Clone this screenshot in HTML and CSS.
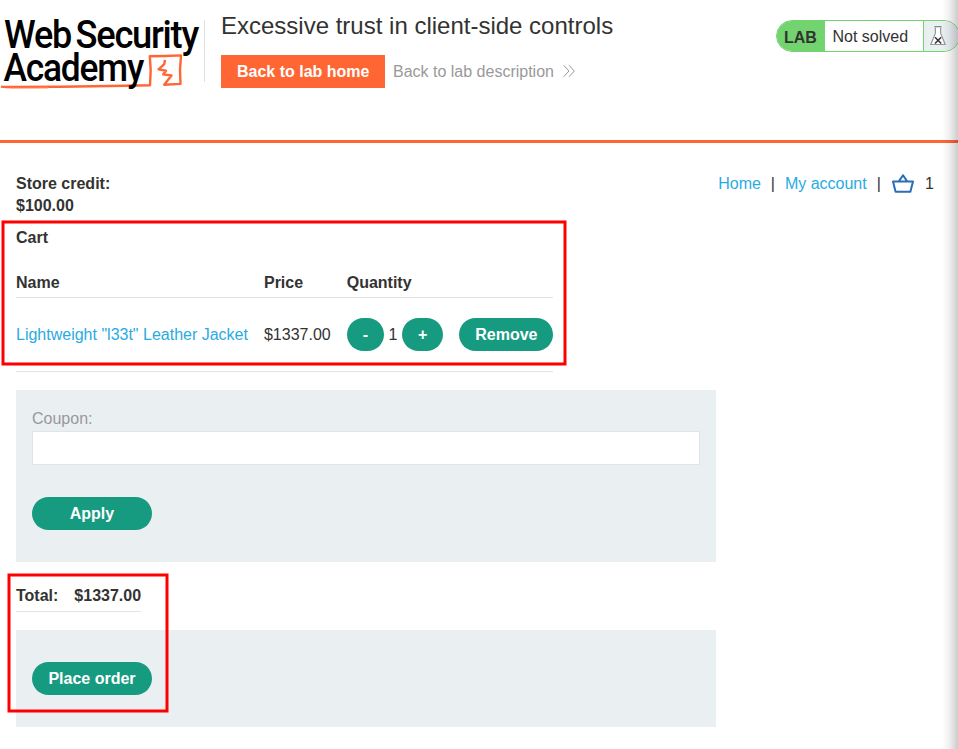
FILE: index.html
```html
<!DOCTYPE html>
<html lang="en">
<head>
<meta charset="utf-8">
<title>Excessive trust in client-side controls</title>
<link rel="stylesheet" href="styles.css">
</head>
<body>
<header class="lab-header">
  <svg class="logo" width="204" height="100" viewBox="0 0 204 100" role="img" aria-label="Web Security Academy">
    <path d="M1 86.6 Q4 87.2 10 87 L60 86.8 L110 86 L150 85.2 L150.7 70 L149.8 56.3 L165 56 L181 55.4 L180 70 L180.5 83.9 L164.2 84.7 L171.5 75.5 L163.2 74.4 L166 70.8 L158.6 69.4 L164.2 64.2 L165 60" fill="none" stroke="#ff6633" stroke-width="2.4" stroke-linejoin="round"/>
    <path d="M10 88.4 L48 88.2" stroke="#ffb59b" stroke-width="1"/>
    <g class="logo-text">
      <text x="4" y="48.2" textLength="67" lengthAdjust="spacingAndGlyphs">Web</text>
      <text x="75.5" y="48.2" textLength="122.5" lengthAdjust="spacingAndGlyphs">Security</text>
      <text x="3.5" y="81" textLength="139.5" lengthAdjust="spacingAndGlyphs">Academy</text>
    </g>
  </svg>
  <div class="title">
    <h2>Excessive trust in client-side controls</h2>
    <div class="lab-links">
      <a class="lab-home" href="#">Back to lab home</a>
      <a class="lab-description" href="#">Back to lab description
        <svg width="12" height="12" viewBox="0 0 12 12"><path d="M.7 .3 L6 6 L.7 11.7 M6 .3 L11.3 6 L6 11.7" fill="none" stroke="#999" stroke-width="1"/></svg>
      </a>
    </div>
  </div>
  <div class="status">
    <span class="status-tag">LAB</span>
    <p>Not solved</p>
    <span class="status-icon">
      <svg width="16" height="20" viewBox="0 0 16 20"><path d="M5.4 1.5 V7.2 L.8 18.5 H15.2 L10.6 7.2 V1.5" fill="#fff" stroke="#999" stroke-width="1.2"/><path d="M4.4 .6 H11.6" stroke="#888" stroke-width="1.2"/><path d="M5 11.3 L11.2 17.5 M11.2 11.3 L5 17.5" stroke="#333" stroke-width="1.5"/></svg>
    </span>
  </div>
</header>
<main class="store">
  <div class="top-row">
    <p class="credit"><strong>Store credit:<br>$100.00</strong></p>
    <nav>
      <a href="#">Home</a><span class="bar">|</span><a href="#">My account</a><span class="bar">|</span>
      <svg class="basket" width="22" height="19" viewBox="0 0 22 19"><path d="M1 7.6 H21 L18.4 17.8 H3.6 Z M6.8 7.4 L11 1.2 L15.2 7.4" fill="none" stroke="#2b6cb8" stroke-width="2" stroke-linejoin="round"/></svg>
      <span class="count">1</span>
    </nav>
  </div>
  <h3>Cart</h3>
  <table class="cart">
    <thead><tr><th>Name</th><th>Price</th><th>Quantity</th><th></th></tr></thead>
    <tbody><tr>
      <td class="text-cell"><a href="#">Lightweight "l33t" Leather Jacket</a></td>
      <td class="text-cell">$1337.00</td>
      <td><div class="quantity"><button class="minus">-</button><span>1</span><button class="plus">+</button></div></td>
      <td><button class="remove">Remove</button></td>
    </tr></tbody>
  </table>
  <form class="panel coupon">
    <label for="coupon">Coupon:</label>
    <input id="coupon" type="text">
    <button type="button" class="wide">Apply</button>
  </form>
  <div class="total"><span>Total:</span><span>$1337.00</span></div>
  <form class="panel order"><button type="button" class="wide">Place order</button></form>
</main>
<svg class="highlights" width="958" height="749" viewBox="0 0 958 749"><rect x="3" y="222" width="562" height="142"/><rect x="9" y="575" width="158" height="136"/></svg>
<div class="edge-shadow"></div>
</body>
</html>
```
FILE: styles.css
```css
* { box-sizing: border-box; }
body {
  margin: 0;
  position: relative;
  height: 749px;
  overflow: hidden;
  background: #fff;
  color: #333332;
  font: 16px/22px "Liberation Sans", Arial, sans-serif;
}
h2, h3, p { margin: 0; }
a { color: #29abe2; text-decoration: none; }

.lab-header {
  display: flex;
  align-items: flex-start;
  width: 960px;
  height: 143px;
  border-bottom: 3px solid #ff6633;
}
.logo { flex: none; overflow: visible; }
.logo-text { font: 500 38px Roboto, sans-serif; letter-spacing: -1.3px; fill: #000; }
.title { flex: 1; padding-left: 17px; position: relative; }
.title::before {
  content: "";
  position: absolute;
  left: 0;
  top: 20px;
  height: 62px;
  border-left: 1px solid #e0e0e0;
}
h2 { margin-top: 11px; font-size: 24px; line-height: 30px; font-weight: 400; }
.lab-links { display: flex; align-items: center; gap: 7.5px; margin-top: 14px; }
.lab-home { height: 33px; padding: 0 16px; line-height: 33px; color: #fff; background: #ff6633; font-weight: 700; }
.lab-description { display: flex; align-items: center; gap: 9px; color: #999; }
.lab-description svg { margin-top: -1px; }

.status {
  display: flex;
  width: 184px;
  height: 32px;
  margin-top: 20px;
  overflow: hidden;
  border: 1px solid #72d36f;
  border-radius: 16px;
}
.status-tag { width: 48px; padding-left: 7px; line-height: 33px; font-weight: 700; background: #72d36f; }
.status p { width: 98px; padding-left: 7.5px; line-height: 31px; }
.status-icon { flex: 1; padding: 5px 0 0 6px; border-left: 1px solid #72d36f; background: #eaeff2; }
.status svg { display: block; }

.store { padding: 30px 16px 0; }
.top-row { display: flex; justify-content: space-between; }
nav { display: flex; height: 22px; margin-right: 8px; }
.bar { width: 24px; text-align: center; }
.basket { margin: 1px 11.4px 0 1px; }
h3 { margin-top: 10px; font-size: 16px; line-height: 22px; }

.cart { margin-top: 17px; border-collapse: collapse; }
.cart th { height: 31px; padding: 4px 16px 0 0; text-align: left; border-bottom: 1px solid #e1e3e4; }
.cart td { height: 74px; padding: 0 16px 0 0; border-bottom: 1px solid #e1e3e4; }
.cart .text-cell { padding-top: 1px; }
.cart th:last-child, .cart td:last-child { padding-right: 0; }
.quantity { display: flex; align-items: center; }
.quantity span { width: 18px; padding-top: 1px; text-align: center; }
button {
  display: block;
  height: 33px;
  padding: 0 16px;
  border: 0;
  border-radius: 17px;
  color: #fff;
  background: #169b80;
  font: 700 16px/33px "Liberation Sans", Arial, sans-serif;
}
.remove { width: 94px; padding: 0; }
.wide { width: 120px; }

.panel { width: 700px; padding: 0 16px; background: #eaeff2; }
.coupon { height: 172px; margin-top: 18px; padding-top: 18px; }
.coupon label { display: block; height: 23px; color: #999; }
.coupon input { display: block; width: 668px; height: 34px; margin-bottom: 32px; border: 1px solid #e1e3e4; background: #fff; }
.total { display: flex; width: max-content; gap: 16px; height: 27px; margin-top: 23px; font-weight: 700; border-bottom: 1px solid #e1e3e4; }
.order { height: 97px; margin-top: 18px; padding-top: 32px; }

.highlights { position: absolute; left: 0; top: 0; pointer-events: none; }
.highlights rect { fill: none; stroke: #ff0000; stroke-width: 3; }
.edge-shadow { position: absolute; right: 0; top: 0; width: 16px; height: 749px; background: linear-gradient(to right, transparent, rgba(0, 0, 0, .06) 45%, rgba(0, 0, 0, .2)); }
```
